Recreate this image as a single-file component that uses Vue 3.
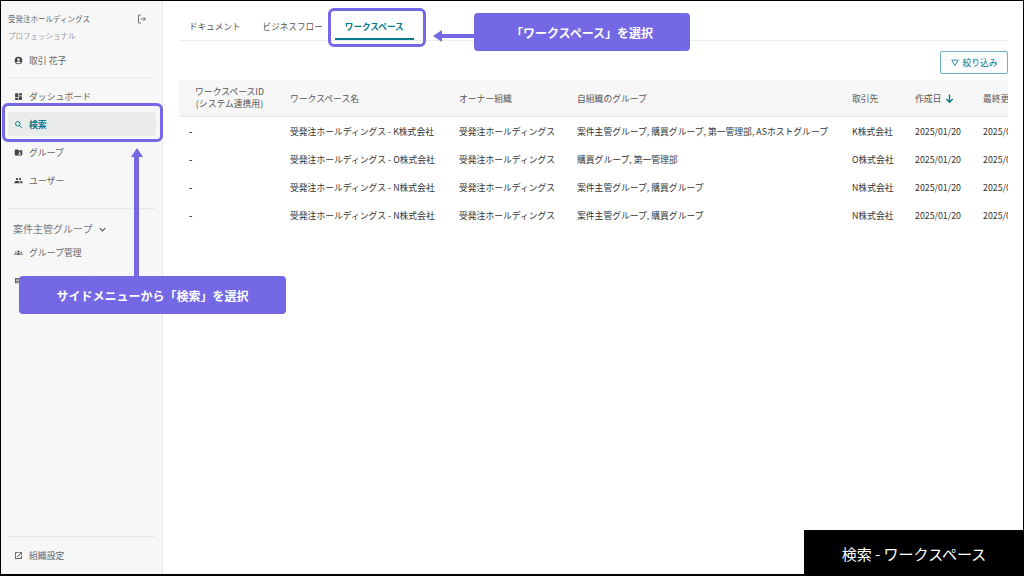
<script setup>
const columns = [
  { key: 'id', label: 'ワークスペースID\n(システム連携用)' },
  { key: 'name', label: 'ワークスペース名' },
  { key: 'owner', label: 'オーナー組織' },
  { key: 'groups', label: '自組織のグループ' },
  { key: 'client', label: '取引先' },
  { key: 'created', label: '作成日', sorted: true },
  { key: 'updated', label: '最終更新日' },
]
const rows = [
  { id: '-', name: '受発注ホールディングス - K株式会社', owner: '受発注ホールディングス', groups: '案件主管グループ, 購買グループ, 第一管理部, ASホストグループ', client: 'K株式会社', created: '2025/01/20', updated: '2025/01/20' },
  { id: '-', name: '受発注ホールディングス - O株式会社', owner: '受発注ホールディングス', groups: '購買グループ, 第一管理部', client: 'O株式会社', created: '2025/01/20', updated: '2025/01/20' },
  { id: '-', name: '受発注ホールディングス - N株式会社', owner: '受発注ホールディングス', groups: '案件主管グループ, 購買グループ', client: 'N株式会社', created: '2025/01/20', updated: '2025/01/20' },
  { id: '-', name: '受発注ホールディングス - N株式会社', owner: '受発注ホールディングス', groups: '案件主管グループ, 購買グループ', client: 'N株式会社', created: '2025/01/20', updated: '2025/01/20' },
]
</script>

<template>
  <div class="screen">
    <div class="frame">
      <aside class="sidebar">
        <div class="org">
          <span>受発注ホールディングス</span>
          <svg class="logout" viewBox="0 0 24 24"><path d="M10 4H5v16h5M5 4v16" fill="none" stroke="currentColor" stroke-width="2"/><path d="M9 12h10M15 8l4 4-4 4" fill="none" stroke="currentColor" stroke-width="2"/></svg>
        </div>
        <div class="plan">プロフェッショナル</div>
        <div class="item user">
          <svg viewBox="0 0 24 24"><path d="M12 2a10 10 0 1 0 0 20 10 10 0 0 0 0-20zm0 4a3.5 3.5 0 1 1 0 7 3.5 3.5 0 0 1 0-7zm0 14a8 8 0 0 1-6.2-3c1-1.700 3.800-2.600 6.200-2.600s5.200.9 6.200 2.600A8 8 0 0 1 12 20z"/></svg>
          <span>取引 花子</span>
        </div>
        <hr class="rule first" />
        <div class="item">
          <svg viewBox="0 0 24 24"><path d="M3 13h8V3H3zm0 8h8v-6H3zm10 0h8V11h-8zm0-18v6h8V3z"/></svg>
          <span>ダッシュボード</span>
        </div>
        <div class="item active">
          <svg viewBox="0 0 24 24"><circle cx="10" cy="10" r="6" fill="none" stroke="currentColor" stroke-width="2.500"/><path d="M14.500 14.500L21 21" stroke="currentColor" stroke-width="2.500"/></svg>
          <span>検索</span>
        </div>
        <div class="item">
          <svg viewBox="0 0 24 24"><path d="M20 6h-8l-2-2H4a2 2 0 0 0-2 2v12a2 2 0 0 0 2 2h16a2 2 0 0 0 2-2V8a2 2 0 0 0-2-2zm-5 3a2 2 0 1 1 0 4 2 2 0 0 1 0-4zm4 8h-8v-1c0-1.300 2.700-2 4-2s4 .7 4 2z"/></svg>
          <span>グループ</span>
        </div>
        <div class="item">
          <svg viewBox="0 0 24 24"><path d="M16 11a3 3 0 1 0 0-6 3 3 0 0 0 0 6zm-8 0a3 3 0 1 0 0-6 3 3 0 0 0 0 6zm0 2c-2.300 0-7 1.200-7 3.500V19h14v-2.500C15 14.200 10.300 13 8 13zm8 0h-1c1.200.8 2 2 2 3.500V19h6v-2.500c0-2.300-4.700-3.500-7-3.500z"/></svg>
          <span>ユーザー</span>
        </div>
        <hr class="rule second" />
        <div class="section">
          <span>案件主管グループ</span>
          <svg viewBox="0 0 24 24"><path d="M6 9l6 6 6-6" fill="none" stroke="currentColor" stroke-width="2.500"/></svg>
        </div>
        <div class="item">
          <svg viewBox="0 0 24 24"><path d="M12 6.500a3 3 0 1 1 0 6 3 3 0 0 1 0-6zM5 9a2 2 0 1 1 0 4 2 2 0 0 1 0-4zm14 0a2 2 0 1 1 0 4 2 2 0 0 1 0-4zM6 18v-1.500C6 15 9 14 12 14s6 1 6 2.500V18zM0 18v-1.200C0 15.500 2 15 4.500 14.600 4.200 15.100 4 15.700 4 16.500V18zm24 0h-4v-1.500c0-.8-.2-1.400-.5-1.900 2.500.4 4.500.9 4.500 2.200z"/></svg>
          <span>グループ管理</span>
        </div>
        <div class="item">
          <svg viewBox="0 0 24 24"><path d="M3 5h18v14H3zm2 2v2h14V7zm0 4v2h14v-2zm0 4v2h14v-2z"/></svg>
          <span>ワークスペース管理</span>
        </div>
        <div class="push"></div>
        <hr class="rule third" />
        <div class="item settings">
          <svg viewBox="0 0 24 24"><path d="M19 19H5V5h7V3H3v18h18v-9h-2z"/><path d="M14 3v2h3.600l-9.800 9.800 1.400 1.400L19 6.400V10h2V3z"/></svg>
          <span>組織設定</span>
        </div>
      </aside>

      <main class="main">
        <nav class="tabs">
          <span class="tab">ドキュメント</span>
          <span class="tab">ビジネスフロー</span>
          <span class="tab current">ワークスペース</span>
        </nav>
        <div class="toolbar">
          <button class="filter">
            <svg viewBox="0 0 24 24"><path d="M4 5h16l-8 13z" fill="none" stroke="currentColor" stroke-width="2" stroke-linejoin="round"/></svg>
            絞り込み
          </button>
        </div>
        <div class="table-clip">
          <div class="row head">
            <div v-for="c in columns" :key="c.key" class="cell" :class="c.key">
              <span class="label">{{ c.label }}</span>
              <svg v-if="c.sorted" class="sort" viewBox="0 0 24 24"><path d="M12 3v17M5 13l7 7 7-7" fill="none" stroke="currentColor" stroke-width="3"/></svg>
            </div>
          </div>
          <div v-for="(r, i) in rows" :key="i" class="row">
            <div v-for="c in columns" :key="c.key" class="cell" :class="c.key">{{ r[c.key] }}</div>
          </div>
        </div>
      </main>
    </div>

    <!-- annotation overlays -->
    <div class="mark mark-side"></div>
    <div class="mark mark-tab"></div>
    <div class="arrow-up"></div>
    <div class="arrow-left"></div>
    <div class="callout callout-side">サイドメニューから「検索」を選択</div>
    <div class="callout callout-tab">「ワークスペース」を選択</div>
    <div class="caption">検索 - ワークスペース</div>
  </div>
</template>

<style scoped>
.screen {
  position: relative;
  width: 1024px;
  height: 576px;
  overflow: hidden;
  background: #000;
  font-family: "Noto Sans CJK JP", "Noto Sans", sans-serif;
  padding: 1px 1px 2px 1px;
  box-sizing: border-box;
}
.frame {
  display: flex;
  height: 100%;
  background: #fff;
}
.sidebar {
  width: 162px;
  flex: none;
  box-sizing: border-box;
  background: #f7f7f7;
  border-right: 1px solid #e8e8e8;
  display: flex;
  flex-direction: column;
  color: #5f6363;
}
.org {
  display: flex;
  justify-content: space-between;
  align-items: center;
  padding: 10px 14px 0 7px;
  font-size: 7.5px;
  line-height: 16px;
  color: #666;
}
.logout { width: 12px; height: 12px; color: #777; }
.plan {
  padding: 1px 0 0 7px;
  font-size: 7.5px;
  line-height: 16px;
  color: #999;
}
.item {
  display: flex;
  align-items: center;
  gap: 6px;
  height: 28px;
  flex: none;
  margin: 0 6px 0 7px;
  padding-left: 6px;
  font-size: 8.9px;
  color: #666;
}
.item svg { width: 9px; height: 9px; fill: #444; flex: none; }
.user { margin-top: 4px; height: 24px; }
.rule {
  border: 0;
  height: 1px;
  background: #e8e8e8;
  margin: 0 7px 0 7px;
  flex: none;
}
.first { margin-top: 5px; margin-bottom: 4px; }
.active {
  height: 24px;
  margin-top: 2px;
  margin-bottom: 2px;
  background: #e9ecea;
  border-radius: 3px;
  color: #00798c;
  font-weight: 700;
}
.active svg { fill: none; color: #00798c; }
.second { margin-top: 14px; }
.section {
  display: flex;
  align-items: center;
  gap: 5px;
  padding: 11px 0 0 12px;
  font-size: 10px;
  line-height: 18px;
  color: #777;
}
.section svg { width: 11px; height: 11px; color: #555; }
.push { flex: 1; }
.third { margin-bottom: 5px; }
.settings { margin-bottom: 0; height: 32px; padding-bottom: 6px; box-sizing: border-box; }

.main {
  flex: 1;
  min-width: 0;
  padding: 11px 15px 0 16px;
}
.tabs {
  display: flex;
  height: 28px;
  border-bottom: 1px solid #ececec;
  padding-left: 0;
}
.tab {
  box-sizing: border-box;
  height: 28px;
  line-height: 29px;
  padding: 0 10px;
  margin-right: 2px;
  font-size: 8.6px;
  color: #555;
  white-space: nowrap;
}
.current {
  width: 79px;
  padding: 0;
  text-align: center;
  color: #00798c;
  font-weight: 700;
  border-bottom: 2px solid #00798c;
}
.toolbar {
  display: flex;
  justify-content: flex-end;
  padding-top: 10px;
  height: 39px;
  box-sizing: border-box;
}
.filter {
  display: flex;
  align-items: center;
  justify-content: center;
  gap: 2px;
  width: 68px;
  height: 23px;
  background: #fff;
  border: 1px solid #6fb1bf;
  border-radius: 2px;
  color: #00798c;
  font: inherit;
  font-size: 8.8px;
  padding: 0;
}
.filter svg { width: 10px; height: 10px; }
.table-clip { overflow: hidden; }
.row {
  display: grid;
  grid-template-columns: 101px 169px 118px 275px 63px 68px 140px;
  width: 934px;
  height: 28px;
  align-items: center;
  font-size: 8.8px;
  color: #333;
}
.head {
  height: 37px;
  background: #f7f7f7;
  border-bottom: 1px solid #e8e8e8;
  box-sizing: border-box;
  color: #555;
}
.cell { padding-left: 10px; white-space: nowrap; }
.label { white-space: pre-line; line-height: 12px; display: inline-block; }
.head .id { text-align: center; padding: 0; }
.sort { width: 11px; height: 11px; color: #00798c; margin-left: 3px; vertical-align: -2px; }
.row:not(.head) .id { font-weight: 700; }

.mark {
  position: absolute;
  box-sizing: border-box;
  border: 3px solid #7468e4;
  border-radius: 6px;
}
.mark-side { left: 2px; top: 103px; width: 161px; height: 39px; }
.mark-tab { left: 328px; top: 8px; width: 98px; height: 39px; }
.arrow-up {
  position: absolute;
  left: 134px;
  top: 156px;
  width: 5px;
  height: 120px;
  background: #7468e4;
}
.arrow-up::before {
  content: "";
  position: absolute;
  left: -3.500px;
  top: -8px;
  border-left: 6px solid transparent;
  border-right: 6px solid transparent;
  border-bottom: 9px solid #7468e4;
}
.arrow-left {
  position: absolute;
  left: 442px;
  top: 34px;
  width: 32px;
  height: 4px;
  background: #7468e4;
}
.arrow-left::before {
  content: "";
  position: absolute;
  left: -9px;
  top: -4px;
  border-top: 6px solid transparent;
  border-bottom: 6px solid transparent;
  border-right: 9px solid #7468e4;
}
.callout {
  position: absolute;
  display: flex;
  align-items: center;
  justify-content: center;
  height: 38px;
  background: #7468e4;
  border-radius: 4px;
  color: #fff;
  font-size: 12px;
  font-weight: 700;
  white-space: nowrap;
}
.callout-side { left: 19px; top: 276px; width: 267px; }
.callout-tab { left: 474px; top: 13px; width: 216px; }
.caption {
  position: absolute;
  left: 804px;
  top: 530px;
  width: 220px;
  height: 46px;
  display: flex;
  align-items: center;
  justify-content: center;
  background: #000;
  color: #fff;
  font-size: 15px;
  white-space: pre;
}
</style>
